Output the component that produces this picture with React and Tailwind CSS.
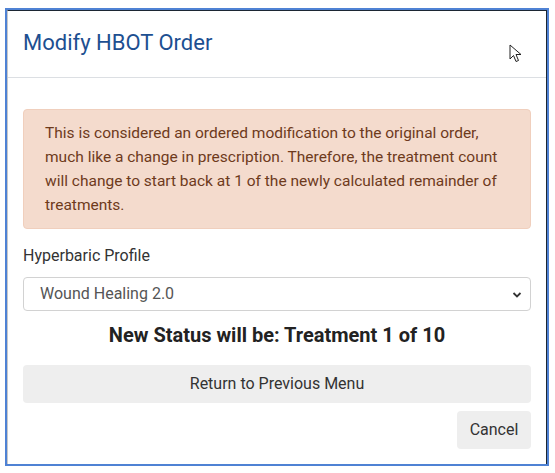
const Cursor = () => (
  <svg width="14" height="20" viewBox="0 0 14 20" className="absolute left-[502px] top-[34px]">
    <path d="M1 1 L1 15 L4.5 11.5 L7 17.5 L9.5 16.5 L7 10.5 L12 10.5 Z" fill="#fff" stroke="#222" strokeWidth="1" strokeLinejoin="round" />
  </svg>
);

const Chevron = () => (
  <svg width="10" height="8" viewBox="0 0 10 8" className="absolute right-[8px] top-[13px]">
    <path d="M1.5 2 L5 5.5 L8.5 2" fill="none" stroke="#333" strokeWidth="1.8" />
  </svg>
);

export default function App() {
  return (
    <div className="w-[555px] h-[473px] bg-white pt-[8px] pl-[5px] font-['Roboto','Liberation_Sans',sans-serif]">
      <div className="relative w-[544px] h-[458px] border-2 border-[#4f82d4]">
        <div className="h-full border-t border-r border-[#1c2633] border-l border-l-[#c8c8c8]">
          <div className="h-[67px] border-b border-[#dcdfe3] pl-[15px] flex items-center">
            <h5 className="text-[22px] text-[#1d4f91] leading-none pb-[2px]">Modify HBOT Order</h5>
          </div>
          <div className="px-[15px] pt-[31px]">
            <div className="bg-[#f4dbcd] border border-[#f0cfbd] rounded-[4px] pl-[21px] pr-5 py-[11px] text-[15.5px] leading-[24px] text-[#6e3a1c]">
              This is considered an ordered modification to the original order, much like a change in prescription. Therefore, the treatment count will change to start back at 1 of the newly calculated remainder of treatments.
            </div>
            <div className="mt-[16px] text-[16px] leading-[22px] text-[#333]">Hyperbaric Profile</div>
            <div className="relative mt-[10px] h-[34px] border border-[#d2d2d2] rounded-[4px] pl-[16px] flex items-center text-[16px] text-[#555]">
              Wound Healing 2.0
              <Chevron />
            </div>
            <div className="mt-[12px] text-center text-[20px] font-bold leading-[24px] text-[#222]">
              New Status will be: Treatment 1 of 10
            </div>
            <button className="mt-[18px] w-full h-[38px] bg-[#eeeeee] rounded-[4px] text-[16px] text-[#333]">
              Return to Previous Menu
            </button>
            <div className="mt-[8px] flex justify-end">
              <button className="w-[74px] h-[38px] bg-[#eeeeee] rounded-[4px] text-[16px] text-[#333]">Cancel</button>
            </div>
          </div>
        </div>
        <Cursor />
      </div>
    </div>
  );
}
